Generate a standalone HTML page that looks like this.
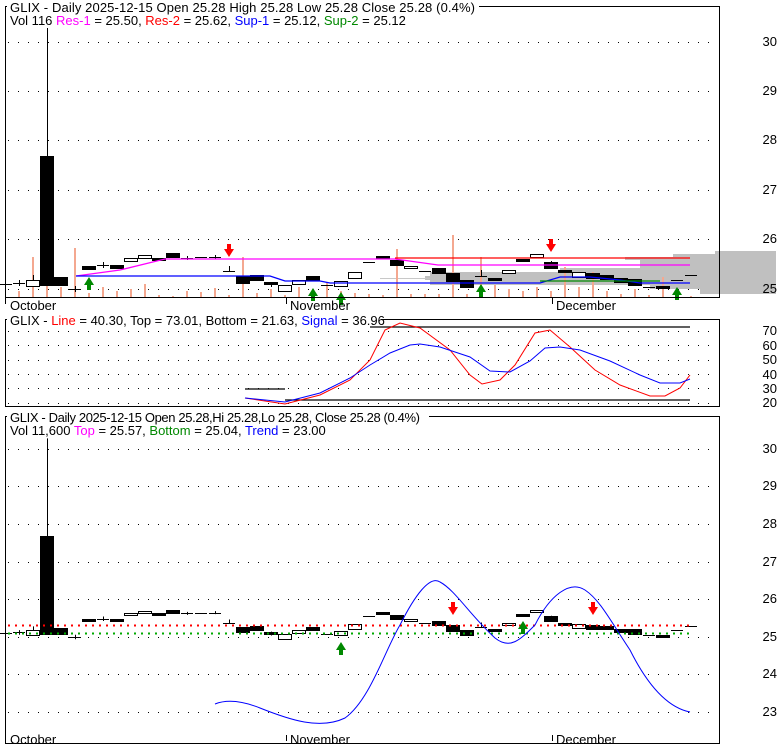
<!DOCTYPE html>
<html><head><meta charset="utf-8"><style>
body{margin:0;background:#fff;width:780px;height:745px;overflow:hidden}
svg{display:block;font-family:"Liberation Sans",sans-serif;font-size:13px}
</style></head><body>
<svg id="s" width="780" height="745" xmlns="http://www.w3.org/2000/svg">
<rect width="780" height="745" fill="#fff"/>
<g id="g"></g>
<rect x="5.5" y="6.5" width="714" height="291" fill="none" stroke="#000"/>
<rect x="5.5" y="319.5" width="714" height="87" fill="none" stroke="#000"/>
<rect x="5.5" y="416.5" width="714" height="327" fill="none" stroke="#000"/>
<rect x="7" y="0" width="472" height="14" fill="#fff"/>
<text x="10" y="12" textLength="465">GLIX - Daily 2025-12-15 Open 25.28  High 25.28  Low 25.28  Close 25.28 (0.4%)</text>
<text x="10" y="25">Vol 116 <tspan fill="#f0f">Res-1</tspan> = 25.50, <tspan fill="#f00">Res-2</tspan> = 25.62, <tspan fill="#00f">Sup-1</tspan> = 25.12, <tspan fill="#080">Sup-2</tspan> = 25.12</text>
<rect x="7" y="313" width="374" height="13" fill="#fff"/>
<text x="10" y="325">GLIX - <tspan fill="#f00">Line</tspan> = 40.30, Top = 73.01, Bottom = 21.63, <tspan fill="#00f">Signal</tspan> = 36.96</text>
<rect x="7" y="410" width="422" height="13" fill="#fff"/>
<text x="10" y="422" textLength="410">GLIX - Daily 2025-12-15 Open 25.28,Hi 25.28,Lo 25.28, Close 25.28 (0.4%)</text>
<text x="10" y="435">Vol 11,600 <tspan fill="#f0f">Top</tspan> = 25.57, <tspan fill="#080">Bottom</tspan> = 25.04, <tspan fill="#00f">Trend</tspan> = 23.00</text>
<g text-anchor="end">
<text x="777" y="46">30</text><text x="777" y="95">29</text><text x="777" y="144">28</text><text x="777" y="194">27</text><text x="777" y="243">26</text><text x="777" y="293">25</text>
<text x="777" y="335">70</text><text x="777" y="350">60</text><text x="777" y="364">50</text><text x="777" y="379">40</text><text x="777" y="393">30</text><text x="777" y="407">20</text>
<text x="777" y="453">30</text><text x="777" y="490">29</text><text x="777" y="528">28</text><text x="777" y="566">27</text><text x="777" y="603">26</text><text x="777" y="641">25</text><text x="777" y="678">24</text><text x="777" y="716">23</text>
</g>
<text x="10" y="310">October</text><text x="290" y="310">November</text><text x="556" y="310">December</text>
<text x="10" y="744">October</text><text x="290" y="744">November</text><text x="556" y="744">December</text>
<path d="M5.5 298v6M286.5 298v6M552.5 298v6M5.5 735v6M286.5 735v6M552.5 735v6" stroke="#000"/>
</svg>
<script>
var g=document.getElementById('g'),h='';
function L(d,c,w,extra){h+='<path d="'+d+'" fill="none" stroke="'+c+'" stroke-width="'+(w||1)+'" '+(extra||'')+'/>';}
function R(x,y,w,hh,f,s){h+='<rect x="'+x+'" y="'+y+'" width="'+w+'" height="'+hh+'" fill="'+f+'" stroke="'+(s||'none')+'"/>';}
[42,91,140,190,239,289].forEach(function(y){L('M8 '+y+'.5H718','#000',1,'stroke-dasharray="1 9"');});
[331,345,360,374,388,403].forEach(function(y){L('M8 '+y+'.5H718','#000',1,'stroke-dasharray="1 9"');});
[449,486,524,562,599,637,674,712].forEach(function(y){L('M8 '+y+'.5H718','#000',1,'stroke-dasharray="1 9"');});
[[251,254,715],[254,257,673],[257,260,625],[260,263,640],[263,268,640],[268,272,560],[272,276,430],[276,280,425],[280,285,430],[285,289,650],[289,294,700]].forEach(function(b){R(b[2],b[0],776-b[2],b[1]-b[0],'#c0c0c0');});
L('M380 278.5H430','#c8c8c8');
var vols=[[19,6],[33,40],[47,85],[61,10],[75,49],[89,4],[103,10],[117,6],[131,8],[145,13],[159,2],[173,1],[187,6],[201,5],[215,9],[229,2],[243,40],[257,4],[271,8],[285,2],[299,10],[313,8],[327,15],[341,6],[355,4],[369,3],[383,2],[397,48],[411,3],[425,3],[439,3],[453,62],[467,3],[481,40],[495,12],[509,8],[523,6],[537,10],[551,6],[565,30],[579,10],[593,25],[607,6],[621,3],[635,8],[649,2],[663,20],[677,1],[691,1]];
vols.forEach(function(v){R(v[0]-1,297-v[1],2,v[1],'#f4a890');});
var C=[[6,284,284,0],[19,283,283,0,280,286],[33,280,286,0,275],[47,156,285,1,28],[61,277,285,1],[75,289,289,0,286,292],[89,266,269,1],[103,265,265,0,262,268],[117,265,268,1],[131,258,261,0],[145,255,258,0],[159,258,260,1],[173,253,257,1],[187,258,258,0,256,260],[201,257,257,0],[215,257,257,0,255,259],[229,271,271,0,266],[243,276,283,1],[257,275,280,1],[271,282,284,1,282,287],[285,285,291,0],[299,280,284,0],[313,276,280,1],[327,285,285,0],[341,281,286,0],[355,272,278,0],[369,262,262,0],[383,256,258,1],[397,260,265,1],[411,266,268,0],[425,271,271,0],[439,268,273,1],[453,273,281,1],[467,280,287,1],[481,276,276,0,270],[495,278,280,1],[509,270,273,0],[523,259,261,1],[537,254,257,0],[551,262,268,1,261],[565,270,272,1],[579,272,277,0],[593,273,278,1],[607,275,279,1],[621,278,282,1],[635,279,285,1],[649,287,287,0],[663,286,288,1],[677,280,280,0],[691,275,275,0]];
function candles(map){C.forEach(function(c){var t=map(c[1]),b=map(c[2]);
 var wt=c[4]!=null?map(c[4]):t, wb=c[5]!=null?map(c[5]):b;
 if(wt<t||wb>b)L('M'+c[0]+'.5 '+wt+'V'+wb,'#000');
 if(b-t<1.5)L('M'+(c[0]-6)+' '+(Math.round(t)+.5)+'H'+(c[0]+6),'#000');
 else R(c[0]-6.5,Math.round(t)+.5,13,Math.round(b-t),c[3]?'#000':'#fff','#000');});}
candles(function(y){return y;});
L('M76 276L120 270L165 259H395L438 265H690','#f0f',1.3);
L('M395 258H690','#f00',1.3);
L('M76 276H270L285 281H320L330 283H540L560 277H590L620 280L640 283H690','#00f',1.3);
L('M540 281H660','#080',1.3);
function arrow(x,y,up,c){ if(up)h+='<polygon points="'+(x-5)+','+(y+8)+' '+x+','+y+' '+(x+5)+','+(y+8)+' '+(x+2)+','+(y+8)+' '+(x+2)+','+(y+13)+' '+(x-2)+','+(y+13)+' '+(x-2)+','+(y+8)+'" fill="'+c+'"/>';
 else h+='<polygon points="'+(x-5)+','+(y+5)+' '+x+','+(y+13)+' '+(x+5)+','+(y+5)+' '+(x+2)+','+(y+5)+' '+(x+2)+','+y+' '+(x-2)+','+y+' '+(x-2)+','+(y+5)+'" fill="'+c+'"/>';}
arrow(89,277,1,'#080');arrow(313,288,1,'#080');arrow(341,292,1,'#080');arrow(481,284,1,'#080');arrow(677,287,1,'#080');
arrow(229,244,0,'#f00');arrow(551,239,0,'#f00');
L('M245 389H285M370 327H690','#000',1.3);
L('M285 400H690','#000',1.3);
L('M245 398L285 404L320 395L350 380L370 360L385 330L400 323L420 328L450 350L470 375L482 384L500 380L515 365L535 333L550 330L570 347L595 370L620 385L650 396L665 396L680 388L690 375','#f00');
L('M245 398L285 402L320 393L350 378L370 365L390 353L410 345L420 344L440 347L470 357L490 371L510 372L530 361L545 348L560 347L580 350L610 361L640 375L660 383L680 383L690 379','#00f');
candles(function(y){return 637-(289-y)*0.761;});
L('M8 625.5H690','#f00',2,'stroke-dasharray="2 5"');
L('M8 633.5H690','#0a0',2,'stroke-dasharray="2 5"');
L('M215 704C225 700 240 700 260 708C290 720 320 730 345 718C370 700 385 650 400 625C415 595 430 575 440 582C455 590 470 615 495 638C510 650 520 640 535 625C550 595 570 580 585 590C600 600 610 620 630 650C650 690 670 708 690 712','#00f');
arrow(341,642,1,'#080');arrow(523,621,1,'#080');arrow(453,602,0,'#f00');arrow(593,602,0,'#f00');
g.innerHTML=h;
</script>
</body></html>
